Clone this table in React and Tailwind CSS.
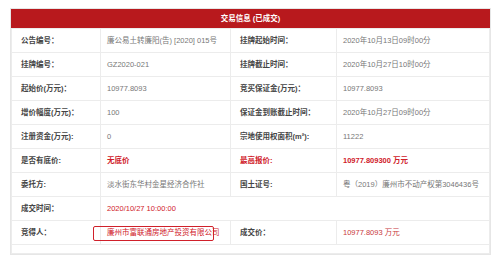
import React from "react";

const rows = [
  ["公告编号：", "廉公易土转廉阳(告) [2020] 015号", "挂牌起始时间：", "2020年10月13日09时00分"],
  ["挂牌编号：", "GZ2020-021", "挂牌截止时间：", "2020年10月27日10时00分"],
  ["起始价(万元)：", "10977.8093", "竞买保证金(万元)：", "10977.8093"],
  ["增价幅度(万元)：", "100", "保证金到账截止时间：", "2020年10月27日09时00分"],
  ["注册资金(万元):", "0", "宗地使用权面积(m²):", "11222"],
];

const Label = ({ children, red }) => (
  <td
    className={
      "h-[24px] border border-[#ececec] pl-[9px] font-bold whitespace-nowrap " +
      (red ? "text-[#d0202a]" : "text-[#444]")
    }
  >
    {children}
  </td>
);

const Value = ({ children, className = "", ...rest }) => (
  <td
    className={"h-[24px] border border-[#ececec] pl-[6px] whitespace-nowrap text-[#777] " + className}
    {...rest}
  >
    {children}
  </td>
);

export default function App() {
  return (
    <div
      className="w-[500px] h-[260px] bg-white pt-[8px] pl-[10px]"
      style={{ fontFamily: '"Liberation Sans", "Noto Sans CJK SC", sans-serif' }}
    >
      <div className="w-[481px] border border-[#e6e6e6] text-[7.5px] leading-none">
        <div className="h-[19px] bg-[#b8191d] flex items-center justify-center text-white font-bold text-[7.5px]">
          交易信息 (已成交)
        </div>
        <table className="w-full border-collapse table-fixed">
          <colgroup>
            <col className="w-[89px]" />
            <col className="w-[130px]" />
            <col className="w-[106px]" />
            <col />
          </colgroup>
          <tbody>
            {rows.map((r) => (
              <tr key={r[0]}>
                <Label>{r[0]}</Label>
                <Value>{r[1]}</Value>
                <Label>{r[2]}</Label>
                <Value>{r[3]}</Value>
              </tr>
            ))}
            <tr>
              <Label>是否有底价:</Label>
              <Value className="!text-[#d0202a] font-bold">无底价</Value>
              <Label red>最高报价:</Label>
              <Value className="!text-[#d0202a] font-bold">10977.809300 万元</Value>
            </tr>
            <tr>
              <Label>委托方:</Label>
              <Value>淡水街东华村金星经济合作社</Value>
              <Label>国土证号:</Label>
              <Value>粤（2019）廉州市不动产权第3046436号</Value>
            </tr>
            <tr>
              <Label>成交时间：</Label>
              <Value colSpan={3} className="!text-[#d0202a]">
                2020/10/27 10:00:00
              </Value>
            </tr>
            <tr>
              <Label>竞得人：</Label>
              <Value className="relative !text-[#d0202a]">
                <div className="absolute left-[-8px] top-[5px] w-[121px] h-[15px] border border-[#d0202a] rounded-[2px]" />
                廉州市富联通房地产投资有限公司
              </Value>
              <Label>成交价：</Label>
              <Value className="!text-[#c8383c]">10977.8093 万元</Value>
            </tr>
            <tr>
              <td colSpan={4} className="h-[9px] border border-[#ececec]" />
            </tr>
          </tbody>
        </table>
      </div>
    </div>
  );
}
